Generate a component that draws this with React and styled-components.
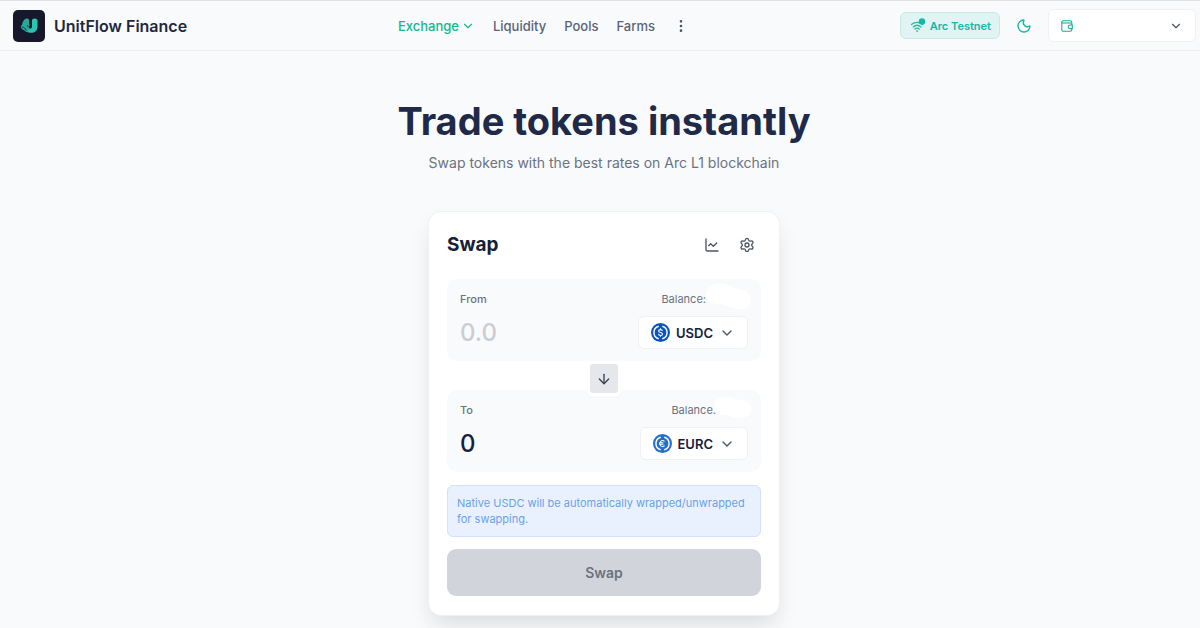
import styled, { createGlobalStyle } from "styled-components";
import {
  ArrowDown,
  ChartLine,
  ChevronDown,
  EllipsisVertical,
  Moon,
  Settings,
} from "lucide-react";

const NAV_LINKS = ["Liquidity", "Pools", "Farms"];

const LogoMark = () => (
  <svg width="32" height="32" viewBox="0 0 32 32" aria-hidden="true">
    <rect width="32" height="32" rx="5" fill="#17182b" />
    <path
      d="M19 10.800c0-1.500 1-2.300 2.700-2.300s2.800.8 2.800 2.300v5.700c0 4-2.500 6.300-6.300 6.300-2.400 0-4.300-.9-5.400-2.600l2.600-2.200c.5.500 1 .7 1.700.7 1.200 0 1.900-.8 1.900-2.100z"
      fill="#2cc4ae"
    />
    <path
      d="M13.400 8.600c1.700-.4 2.700.5 2.700 2v3.300l.7 1.300-1 1.300 1 2.700-2.600 3.100c-1.300-.3-2.300-1-3-2.100-1.900-.8-3.300-1.900-3.400-3.300 0-1.100 1-1.500 1.400-2.400.4-2 1.600-5.300 4.200-5.900z"
      fill="#27a99b"
    />
    <path
      d="M8.800 17c2.200.2 3.600 1.300 4.400 3.500M14.200 15.200l1.300 2.200"
      fill="none"
      stroke="#17182b"
      strokeWidth=".8"
    />
  </svg>
);

const WifiMark = () => (
  <svg width="16" height="16" viewBox="0 0 16 16" aria-hidden="true">
    <g fill="none" stroke="#2bb8a6" strokeWidth="1.300" strokeLinecap="round">
      <path d="M1.500 6.600c3.200-2.900 8-2.900 11.200 0" />
      <path d="M3.200 8.900c2.300-2 5.500-2 7.800 0" />
      <path d="M4.900 11.100c1.300-1.100 3.100-1.100 4.400 0" />
      <path d="M6.700 13.100c.3-.2.600-.2.900 0" />
    </g>
    <circle cx="12" cy="3.500" r="3.200" fill="#14b8a6" />
  </svg>
);

const WalletMark = () => (
  <svg
    width="12"
    height="12"
    viewBox="0 0 12 12"
    fill="none"
    stroke="#1fae98"
    strokeWidth="1.100"
    aria-hidden="true"
  >
    <path d="M10.800 5V2.300a1.500 1.500 0 0 0-1.500-1.500H2.300A1.500 1.500 0 0 0 .8 2.300v7.400a1.500 1.500 0 0 0 1.500 1.500h7a1.500 1.500 0 0 0 1.500-1.500V8.600" />
    <path d="M.8 3h10" />
    <path d="M11.300 5H9a1.800 1.800 0 0 0 0 3.600h2.300z" />
  </svg>
);

const CoinMark = ({ color, euro }) => (
  <svg width="19" height="19" viewBox="0 0 32 32" aria-hidden="true">
    <circle cx="16" cy="16" r="16" fill={color} />
    <g fill="none" stroke="#fff" strokeLinecap="butt">
      <path
        d="M13 5.400a11 11 0 0 0 0 21.200M19 5.400a11 11 0 0 1 0 21.200"
        strokeWidth="2.400"
      />
      {euro ? (
        <path
          d="M19.500 12.300a4.900 4.900 0 1 0 0 7.400M10.500 14.700h7M10.500 17.400h7"
          strokeWidth="1.700"
        />
      ) : (
        <path
          d="M19.200 13.400c-.3-1.500-1.500-2.200-3.200-2.200-2 0-3.200.9-3.200 2.300 0 3.500 6.600 1.600 6.600 5 0 1.500-1.300 2.400-3.400 2.400-2 0-3.300-.9-3.500-2.500M16 8.800v2.400M16 20.900v2.400"
          strokeWidth="1.800"
        />
      )}
    </g>
  </svg>
);

const TokenPanel = ({ id, label, balance, token, cover, children }) => (
  <Panel>
    <PanelRow>
      <FieldLabel htmlFor={id}>{label}</FieldLabel>
      <Balance $room={cover.room}>
        {balance}
        <Cover
          width="46"
          height="28"
          viewBox="0 0 46 28"
          fill="#fff"
          aria-hidden="true"
        >
          <path d={cover.path} />
        </Cover>
      </Balance>
    </PanelRow>
    <PanelRow>
      {children}
      <TokenButton type="button">
        <CoinMark color={token.color} euro={token.euro} />
        {token.name}
        <ChevronDown size={16} color="#4b5563" />
      </TokenButton>
    </PanelRow>
  </Panel>
);

const App = () => {
  return (
    <Page>
      <GlobalStyle />
      <Header>
        <Brand href="#">
          <LogoMark />
          UnitFlow Finance
        </Brand>

        <Nav>
          <NavButton type="button">
            Exchange
            <ChevronDown size={14} />
          </NavButton>
          {NAV_LINKS.map((link) => (
            <NavLink key={link} href="#">
              {link}
            </NavLink>
          ))}
          <MoreButton type="button" aria-label="More">
            <EllipsisVertical size={16} />
          </MoreButton>
        </Nav>

        <Actions>
          <NetworkButton type="button">
            <WifiMark />
            Arc Testnet
          </NetworkButton>
          <ThemeButton type="button" aria-label="Toggle theme">
            <Moon size={16} />
          </ThemeButton>
          <WalletButton type="button" aria-label="Wallet">
            <WalletMark />
            <ChevronDown size={14} color="#4b5563" />
          </WalletButton>
        </Actions>
      </Header>

      <Main>
        <Title>Trade tokens instantly</Title>
        <Subtitle>Swap tokens with the best rates on Arc L1 blockchain</Subtitle>

        <Card>
          <CardHeader>
            <CardTitle>Swap</CardTitle>
            <CardTools>
              <ToolButton type="button" aria-label="Chart">
                <ChartLine size={16} />
              </ToolButton>
              <ToolButton type="button" aria-label="Settings">
                <Settings size={16} />
              </ToolButton>
            </CardTools>
          </CardHeader>

          <TokenPanel
            id="from"
            label="From"
            balance="Balance:"
            token={{ name: "USDC", color: "#0b53bf" }}
            cover={{
              room: 42,
              path: "M1 12C2 5 9 1 18 2c7 1 10 4 16 5 7 1 12 5 12 11 0 7-6 10-13 9-8-1-11-5-19-5C6 22 0 18 1 12z",
            }}
          >
            <Amount id="from" placeholder="0.0" inputMode="decimal" />
          </TokenPanel>

          <SwitchButton type="button" aria-label="Switch tokens">
            <ArrowDown size={16} />
          </SwitchButton>

          <TokenPanel
            id="to"
            label="To"
            balance="Balance."
            token={{ name: "EURC", color: "#2370cc", euro: true }}
            cover={{
              room: 32,
              path: "M9 11c1-5 8-8 15-7 5 1 7 3 12 3 6 0 10 4 10 9 0 6-5 9-11 9-6 1-10-3-16-3-7 1-11-5-10-11z",
            }}
          >
            <Amount id="to" value="0" readOnly />
          </TokenPanel>

          <Notice>
            Native USDC will be automatically wrapped/unwrapped for swapping.
          </Notice>
          <SubmitButton type="button" disabled>
            Swap
          </SubmitButton>
        </Card>
      </Main>
    </Page>
  );
};

export default App;

const GlobalStyle = createGlobalStyle`
  * {
    box-sizing: border-box;
  }

  body {
    margin: 0;
    background-color: #f9fafc;
    font-family: Inter, "Liberation Sans", sans-serif;
    color: #1e293b;
  }

  button,
  input {
    margin: 0;
    padding: 0;
    border: none;
    background: none;
    font-family: inherit;
    color: inherit;
  }

  button {
    cursor: pointer;
  }

  svg {
    flex-shrink: 0;
    display: block;
  }
`;

const Page = styled.div`
  min-height: 100vh;
`;

const Header = styled.header`
  display: flex;
  align-items: center;
  justify-content: space-between;
  padding: 8px 4px 8px 13px;
  border-top: 1px solid #dfe1e6;
  border-bottom: 1px solid #eceef1;
`;

const Brand = styled.a`
  display: flex;
  align-items: center;
  gap: 9px;
  font-size: 16px;
  font-weight: 600;
  color: #1e293b;
  text-decoration: none;
`;

const Nav = styled.nav`
  display: flex;
  align-items: center;
  gap: 18px;
`;

const NavLink = styled.a`
  font-size: 13px;
  font-weight: 500;
  line-height: 20px;
  color: #5b6475;
  text-decoration: none;
`;

const NavButton = styled.button`
  display: flex;
  align-items: center;
  gap: 2px;
  font-size: 13px;
  font-weight: 500;
  line-height: 20px;
  color: #14b890;
`;

const MoreButton = styled.button`
  color: #4b5563;
`;

const Actions = styled.div`
  display: flex;
  align-items: center;
  gap: 16px;
`;

const NetworkButton = styled.button`
  display: flex;
  align-items: center;
  gap: 4px;
  height: 27px;
  padding: 0 8px 0 9px;
  border: 1px solid #c5e9e5;
  border-radius: 6px;
  background-color: #e0f4f3;
  font-size: 11px;
  font-weight: 600;
  color: #14b8a6;
`;

const ThemeButton = styled.button`
  color: #14b8a6;
`;

const WalletButton = styled.button`
  display: flex;
  align-items: center;
  justify-content: space-between;
  width: 148px;
  height: 33px;
  padding: 0 12px;
  border: 1px solid #eff1f4;
  border-radius: 6px;
  background-color: #fff;
`;

const Main = styled.main`
  display: flex;
  flex-direction: column;
  align-items: center;
  padding: 46px 0 12px 8px;
`;

const Title = styled.h1`
  margin: 0;
  font-size: 38px;
  font-weight: 700;
  line-height: 48px;
  color: #1e2a47;
`;

const Subtitle = styled.p`
  margin: 7px 0 37px;
  font-size: 14px;
  line-height: 22px;
  color: #6b7280;
`;

const Card = styled.section`
  display: flex;
  flex-direction: column;
  width: 100%;
  max-width: 352px;
  padding: 19px 18px;
  border: 1px solid #f0f1f4;
  border-radius: 13px;
  background-color: #fff;
  box-shadow: 0 12px 22px -4px rgba(0, 0, 0, 0.12);
`;

const CardHeader = styled.div`
  display: flex;
  align-items: center;
  justify-content: space-between;
  margin-bottom: 20px;
`;

const CardTitle = styled.h2`
  margin: 0;
  font-size: 19px;
  font-weight: 700;
  line-height: 28px;
  color: #162136;
`;

const CardTools = styled.div`
  display: flex;
  gap: 7px;
`;

const ToolButton = styled.button`
  padding: 6px;
  color: #4b5563;
`;

const Panel = styled.div`
  display: flex;
  flex-direction: column;
  gap: 9px;
  padding: 12px 13px;
  border-radius: 10px;
  background-color: #f9fafc;
`;

const PanelRow = styled.div`
  display: flex;
  align-items: center;
  justify-content: space-between;
`;

const FieldLabel = styled.label`
  font-size: 11px;
  font-weight: 500;
  line-height: 16px;
  color: #6b7280;
`;

const Balance = styled.span`
  position: relative;
  padding-right: ${({ $room }) => $room}px;
  font-size: 11px;
  line-height: 16px;
  color: #6b7280;
`;

const Cover = styled.svg`
  position: absolute;
  top: -9px;
  right: -3px;
`;

const Amount = styled.input`
  flex: 1;
  min-width: 0;
  height: 33px;
  font-size: 24px;
  font-weight: 500;
  outline: none;
  color: #17203f;

  &::placeholder {
    color: #cbcdd2;
    opacity: 1;
  }
`;

const TokenButton = styled.button`
  display: flex;
  align-items: center;
  gap: 6px;
  height: 33px;
  padding: 0 12px;
  border: 1px solid #eff1f4;
  border-radius: 6px;
  background-color: #fff;
  font-size: 13px;
  font-weight: 600;
  color: #17203a;
`;

const SwitchButton = styled.button`
  z-index: 1;
  display: flex;
  align-items: center;
  justify-content: center;
  align-self: center;
  width: 34px;
  height: 35px;
  margin-bottom: -6px;
  border: 3px solid #fff;
  border-radius: 6px;
  background-color: #e5e7eb;
  color: #374151;
`;

const Notice = styled.p`
  margin: 13px 0 12px;
  padding: 9px;
  border: 1px solid #d3e2fa;
  border-radius: 6px;
  background-color: #e9f1fe;
  font-size: 11px;
  line-height: 16px;
  color: #6aa2e8;
`;

const SubmitButton = styled.button`
  height: 47px;
  border-radius: 9px;
  background-color: #d1d5db;
  font-size: 14px;
  font-weight: 600;
  color: #6b7280;
  cursor: not-allowed;
`;
